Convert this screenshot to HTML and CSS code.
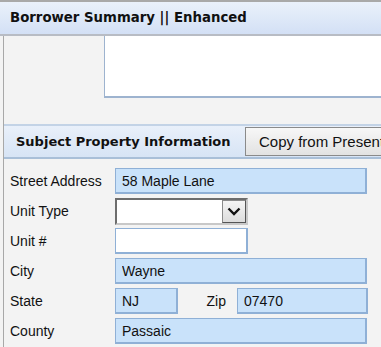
FILE: index.html
```html
<!DOCTYPE html>
<html lang="en">
<head>
    <meta charset="UTF-8">
    <title>Borrower Summary</title>
    <link rel="stylesheet" href="styles.css">
</head>
<body>

    <div class="titlebar">Borrower Summary || Enhanced</div>

    <div class="panel">
        <!-- notes area carried over from the section above -->
        <div class="notes"></div>

        <div class="section-head">
            <span class="section-title">Subject Property Information</span>
            <button class="copy-btn">Copy from Present</button>
        </div>

        <div class="form">
            <div class="row">
                <label>Street Address</label>
                <input class="field wide" type="text" value="58 Maple Lane">
            </div>
            <div class="row">
                <label>Unit Type</label>
                <div class="combo">
                    <span class="combo-btn">
                        <svg width="14" height="9" viewBox="0 0 14 9"><path d="M1.5 1.5 L7 7 L12.5 1.5" fill="none" stroke="#111" stroke-width="2.4"/></svg>
                    </span>
                </div>
            </div>
            <div class="row">
                <label>Unit #</label>
                <input class="field blank short" type="text">
            </div>
            <div class="row">
                <label>City</label>
                <input class="field wide" type="text" value="Wayne">
            </div>
            <div class="row">
                <label>State</label>
                <input class="field state" type="text" value="NJ">
                <span class="zip-label">Zip</span>
                <input class="field zip" type="text" value="07470">
            </div>
            <div class="row">
                <label>County</label>
                <input class="field wide" type="text" value="Passaic">
            </div>
            <div class="row">
                <label></label>
                <input class="field tiny" type="text">
                <span class="spacer"></span>
                <input class="field tiny2" type="text">
            </div>
        </div>
    </div>

</body>
</html>
```

FILE: styles.css
```css
body {
    margin: 0;
    background: #f3f3f3;
    font-family: 'Liberation Sans', Arial, sans-serif;
    font-size: 14px;
    color: #111;
    overflow: hidden;
    height: 347px;
}
.titlebar {
    border-top: 2px solid #a9a9a9;
    border-bottom: 2px solid #b8bcc4;
    height: 32px;
    line-height: 32px;
    padding-left: 10px;
    background: linear-gradient(#eaf1fb, #d3e0f5);
    font-family: 'DejaVu Sans', sans-serif;
    font-weight: bold;
    font-size: 13.3px;
    color: #111;
}
.panel {
    margin-left: 3px;
    border-left: 1px solid #a8a8a8;
    height: 312px;
    overflow: hidden;
}
.notes {
    margin-left: 100px;
    height: 60px;
    background: #fff;
    border-left: 1px solid #9db3cf;
    border-bottom: 2px solid #9db3cf;
}
.section-head {
    margin-top: 26px;
    height: 31px;
    border-top: 2px solid #c3d3e6;
    border-bottom: 2px solid #a9bfd8;
    background: linear-gradient(#e9f0fa, #d7e4f5);
    display: flex;
    align-items: center;
    padding-left: 12px;
    overflow: hidden;
}
.section-title {
    font-family: 'DejaVu Sans', sans-serif;
    font-weight: bold;
    font-size: 13px;
    color: #111;
    flex: 1;
}
.copy-btn {
    flex: none;
    height: 29px;
    width: 160px;
    margin-right: -24px;
    border: 1px solid #8a8a8a;
    background: linear-gradient(#f7f7f7, #e2e2e2);
    font-family: 'Liberation Sans', Arial, sans-serif;
    font-size: 15px;
    color: #111;
    padding: 0 0 0 13px;
    text-align: left;
    white-space: nowrap;
}
.form {
    padding: 9px 0 0 6px;
    display: flex;
    flex-direction: column;
    gap: 4px;
}
.row {
    display: flex;
    align-items: center;
    height: 26px;
}
.row label {
    width: 105px;
    flex: none;
}
.field {
    box-sizing: border-box;
    height: 26px;
    border: 1px solid #8fb0d6;
    border-width: 1px 2px 2px 1px;
    background: #c9e2fa;
    font-family: 'Liberation Sans', Arial, sans-serif;
    font-size: 14px;
    color: #111;
    padding: 0 6px;
    outline: none;
}
.wide { width: 252px; }
.blank { background: #fff; }
.short { width: 133px; }
.state { width: 63px; }
.zip-label {
    width: 59px;
    text-align: right;
    padding-right: 11px;
    box-sizing: border-box;
}
.zip { width: 131px; }
.combo {
    box-sizing: border-box;
    width: 133px;
    height: 27px;
    border: 2px solid #6d6d6d;
    border-right-color: #c8c8c8;
    border-bottom-color: #c8c8c8;
    background: #fff;
    display: flex;
    justify-content: flex-end;
}
.combo-btn {
    width: 24px;
    background: linear-gradient(#f4f4f4, #dcdcdc);
    border: 1px solid #8a8a8a;
    border-right-color: #555;
    border-bottom-color: #555;
    display: flex;
    align-items: center;
    justify-content: center;
    box-sizing: border-box;
}
.tiny { width: 52px; }
.spacer { width: 145px; }
.tiny2 { width: 60px; }
```
